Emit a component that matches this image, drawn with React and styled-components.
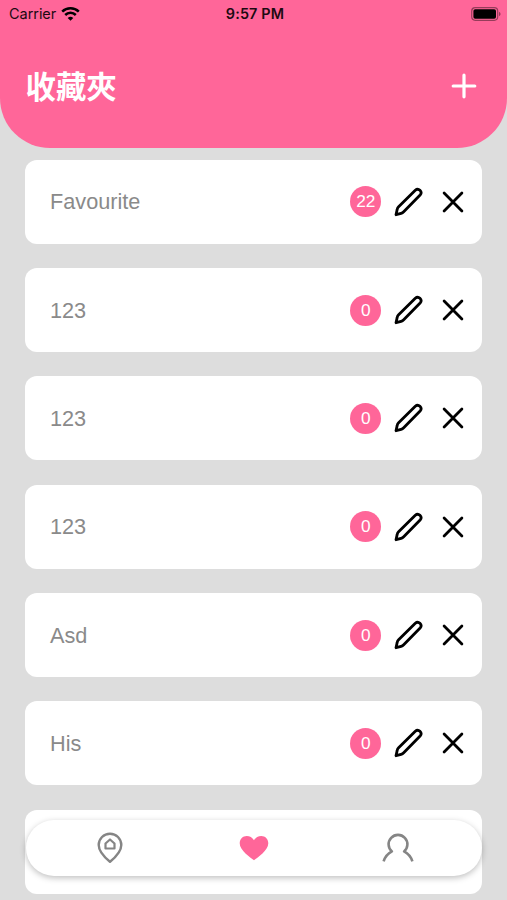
import React from "react";
import styled, { createGlobalStyle } from "styled-components";

const GlobalStyle = createGlobalStyle`
  * {
    box-sizing: border-box;
  }

  body {
    margin: 0;
    background-color: #ddd;
    font-family: "Liberation Sans", "Noto Sans CJK TC", sans-serif;
  }

  svg {
    display: block;
  }
`;

const Screen = styled.div`
  position: relative;
  height: 900px;
  overflow: hidden;
  background-color: #ddd;
`;

const Header = styled.header`
  height: 147.5px;
  border-radius: 0 0 50px 50px;
  background-color: #ff6699;
`;

const StatusBar = styled.div`
  display: grid;
  grid-template-columns: 1fr auto 1fr;
  align-items: center;
  height: 27px;
  padding: 0 6px 0 9px;
  font-family: Inter, sans-serif;
  font-size: 14.5px;
  color: #1c0a11;
`;

const Carrier = styled.div`
  display: flex;
  align-items: center;
  gap: 5px;
  letter-spacing: -0.05px;
`;

const Clock = styled.div`
  font-weight: 600;
  font-size: 14.4px;
  letter-spacing: 0.15px;
`;

const Battery = styled.div`
  display: flex;
  justify-content: flex-end;
`;

const TitleRow = styled.div`
  display: flex;
  align-items: center;
  justify-content: space-between;
  height: 120px;
  padding: 0 30px 2px 25.5px;
`;

const Title = styled.h1`
  margin: 0;
  padding-bottom: 3px;
  font-family: "Noto Sans CJK TC", sans-serif;
  font-size: 30.4px;
  font-weight: 700;
  line-height: 40px;
  color: #fff;
`;

const IconButton = styled.button`
  display: block;
  padding: 0;
  border: none;
  background: none;
`;

const List = styled.ul`
  display: flex;
  flex-direction: column;
  gap: 24.35px;
  margin: 0;
  padding: 12.2px 24.7px 12px 25.3px;
  list-style: none;
`;

const Card = styled.li`
  display: flex;
  align-items: center;
  flex-shrink: 0;
  height: 84px;
  padding: 0 18px 0 24.7px;
  border-radius: 12px;
  background-color: #fff;
`;

const CardName = styled.span`
  flex: 1;
  padding-top: 1.4px;
  font-size: 21.7px;
  line-height: 26px;
  color: #8a8a8a;
`;

const Count = styled.span`
  width: 31px;
  height: 31px;
  margin-right: 13px;
  border-radius: 50%;
  background-color: #ff6699;
  font-size: 17.3px;
  line-height: 31.5px;
  text-align: center;
  color: #fff;
`;

const EditButton = styled(IconButton)`
  margin-right: 18px;
`;

const TabBar = styled.nav`
  position: absolute;
  left: 26px;
  right: 25px;
  bottom: 24px;
  display: grid;
  grid-template-columns: repeat(3, 1fr);
  place-items: center;
  height: 56px;
  padding: 0 12px;
  border-radius: 28px;
  background-color: #fff;
  box-shadow: 0 2px 6px rgba(0, 0, 0, 0.25);
`;

const folders = [
  { id: 1, name: "Favourite", count: 22 },
  { id: 2, name: "123", count: 0 },
  { id: 3, name: "123", count: 0 },
  { id: 4, name: "123", count: 0 },
  { id: 5, name: "Asd", count: 0 },
  { id: 6, name: "His", count: 0 },
];

const WifiIcon = () => (
  <svg width="19" height="14" viewBox="0 0 19 14" fill="none" stroke="#000" strokeWidth="2.5">
    <path d="M1.2 4.7a11.8 11.8 0 0 1 16.6 0" />
    <path d="M4.2 8a7.5 7.5 0 0 1 10.6 0" />
    <path d="M9.5 13.8 6.7 11a4 4 0 0 1 5.6 0z" fill="#000" stroke="none" />
  </svg>
);

const BatteryIcon = () => (
  <svg width="30" height="14" viewBox="0 0 30 14">
    <rect x="0.7" y="0.7" width="26" height="12.6" rx="3.5" fill="none" stroke="#963c5a" strokeWidth="1.2" />
    <rect x="2.4" y="2.2" width="22.6" height="9.6" rx="1.8" />
    <path d="M28 4.7v4.6q1.6-.8 1.6-2.3T28 4.7z" fill="#963c5a" />
  </svg>
);

const PlusIcon = () => (
  <svg width="26" height="26" viewBox="0 0 26 26" stroke="#fff" strokeWidth="3.2" strokeLinecap="round">
    <path d="M13 2.2v21.6M2.2 13h21.6" />
  </svg>
);

const PencilIcon = () => (
  <svg
    width="30"
    height="30"
    viewBox="0 0 30 30"
    fill="none"
    stroke="#000"
    strokeWidth="2.8"
    strokeLinejoin="round"
  >
    <path d="M2 27.7 3.2 22.4q.3-1.5 1.4-2.6L21.3 3.2a3.4 3.4 0 0 1 4.8 4.8L9.7 24.8q-1.1 1.1-2.6 1.5z" />
  </svg>
);

const CloseIcon = () => (
  <svg width="22" height="22" viewBox="0 0 22 22" stroke="#000" strokeWidth="2.8" strokeLinecap="round">
    <path d="m2.1 2.1 17.8 17.8M19.9 2.1 2.1 19.9" />
  </svg>
);

const HomePinIcon = () => (
  <svg width="28" height="32" viewBox="0 0 28 32" fill="none" stroke="#858585" strokeWidth="2.4" strokeLinejoin="round">
    <path d="M14 29.8C10 26.5 2.7 20.5 2.7 13a11.3 11.3 0 0 1 22.6 0C25.3 20.5 18 26.5 14 29.8z" />
    <path d="M9.5 16.5v-5L14 7.5l4.5 4v5z" strokeWidth="2.2" />
  </svg>
);

const HeartIcon = () => (
  <svg width="30" height="26" viewBox="0 0 30 26" fill="#ff6699">
    <path d="M15 25.2C11.4 22.3.7 15.6.7 8.2.7 3.8 4 1 7.7 1c3 0 5.7 1.5 7.3 4.2C16.6 2.5 19.3 1 22.3 1c3.7 0 7 2.8 7 7.2 0 7.4-10.7 14.1-14.3 17z" />
  </svg>
);

const UserIcon = () => (
  <svg width="32" height="30" viewBox="0 0 32 30" fill="none" stroke="#858585" strokeWidth="2.6">
    <path
      d="M1.6 28.3Q3.8 21.6 9.9 18.4a9.4 9.4 0 1 1 12.2 0Q28.200 21.600 30.400 28.300"
      strokeLinejoin="round"
    />
  </svg>
);

const App = () => {
  return (
    <Screen>
      <GlobalStyle />
      <Header>
        <StatusBar>
          <Carrier>
            Carrier
            <WifiIcon />
          </Carrier>
          <Clock>9:57 PM</Clock>
          <Battery>
            <BatteryIcon />
          </Battery>
        </StatusBar>
        <TitleRow>
          <Title>收藏夾</Title>
          <IconButton aria-label="Add">
            <PlusIcon />
          </IconButton>
        </TitleRow>
      </Header>
      <List>
        {folders.map((folder) => (
          <Card key={folder.id}>
            <CardName>{folder.name}</CardName>
            <Count>{folder.count}</Count>
            <EditButton aria-label="Edit">
              <PencilIcon />
            </EditButton>
            <IconButton aria-label="Delete">
              <CloseIcon />
            </IconButton>
          </Card>
        ))}
        {/* empty card behind the tab bar */}
        <Card />
      </List>
      <TabBar>
        <HomePinIcon />
        <HeartIcon />
        <UserIcon />
      </TabBar>
    </Screen>
  );
};

export default App;
